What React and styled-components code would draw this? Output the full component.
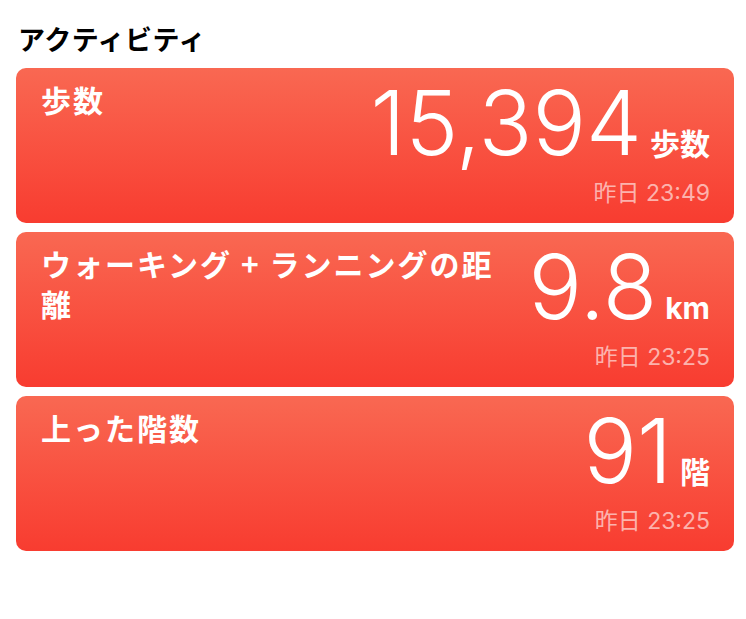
import React from "react";
import styled, { createGlobalStyle } from "styled-components";

const GlobalStyle = createGlobalStyle`
  body {
    margin: 0;
    background: #ffffff;
    font-family: "Inter", "Noto Sans CJK JP", sans-serif;
  }
`;

const Page = styled.div`
  width: 746px;
  padding: 20px 12px 0 16px;
  box-sizing: border-box;
`;

const Title = styled.h2`
  margin: 0 0 10px 2px;
  font-family: "Noto Sans CJK JP", sans-serif;
  font-size: 27px;
  line-height: 38px;
  font-weight: 700;
  letter-spacing: 0.5px;
  color: #000;
`;

const List = styled.div`
  display: flex;
  flex-direction: column;
  gap: 9px;
`;

const Card = styled.div`
  display: flex;
  justify-content: space-between;
  gap: 12px;
  height: 155px;
  box-sizing: border-box;
  padding: 11px 24px 0 25px;
  border-radius: 10px;
  background: linear-gradient(180deg, #f96852 0%, #f83c30 100%);
  color: #fff;
`;

const Label = styled.div`
  flex: 1;
  max-width: 470px;
  font-family: "Noto Sans CJK JP", sans-serif;
  font-size: 30px;
  line-height: 40px;
  font-weight: 700;
  letter-spacing: 2px;
`;

const Side = styled.div`
  display: flex;
  flex-direction: column;
  align-items: flex-end;
`;

const ValueRow = styled.div`
  display: flex;
  align-items: baseline;
  gap: 8px;
`;

const Value = styled.span`
  font-family: "Inter", sans-serif;
  font-size: 89px;
  font-weight: 300;
  line-height: 88px;
`;

const Unit = styled.span`
  font-family: "Inter", "Noto Sans CJK JP", sans-serif;
  font-size: 30px;
  font-weight: 700;
`;

const Time = styled.div`
  margin-top: 7px;
  font-family: "Inter", "Noto Sans CJK JP", sans-serif;
  font-size: 23px;
  font-weight: 400;
  color: rgba(255, 255, 255, 0.6);
`;

const items = [
  { label: "歩数", value: "15,394", unit: "歩数", time: "昨日 23:49" },
  {
    label: "ウォーキング + ランニングの距離",
    value: "9.8",
    unit: "km",
    time: "昨日 23:25",
  },
  { label: "上った階数", value: "91", unit: "階", time: "昨日 23:25" },
];

export default function App() {
  return (
    <>
      <GlobalStyle />
      <Page>
        <Title>アクティビティ</Title>
        <List>
          {items.map((it) => (
            <Card key={it.label}>
              <Label>{it.label}</Label>
              <Side>
                <ValueRow>
                  <Value>{it.value}</Value>
                  <Unit>{it.unit}</Unit>
                </ValueRow>
                <Time>{it.time}</Time>
              </Side>
            </Card>
          ))}
        </List>
      </Page>
    </>
  );
}
